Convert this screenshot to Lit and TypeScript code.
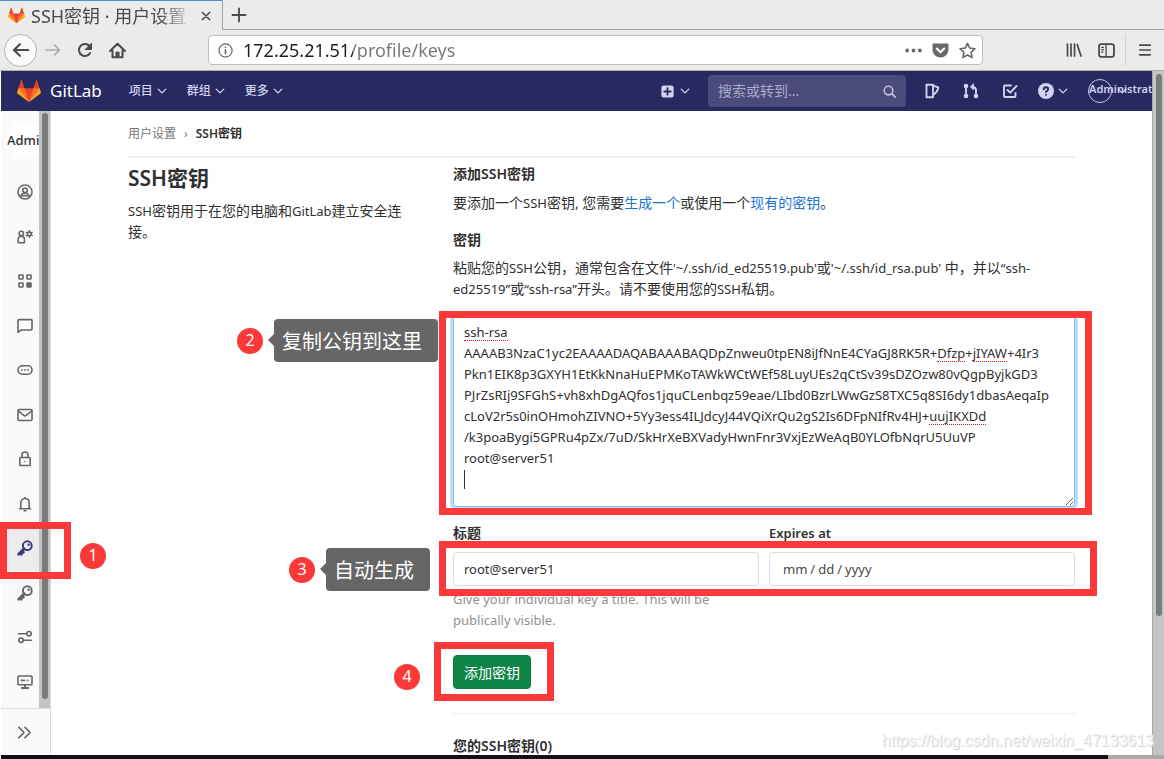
import { LitElement, html, css, svg } from "lit";
import { customElement, state } from "lit/decorators.js";
import { classMap } from "lit/directives/class-map.js";
import { styleMap } from "lit/directives/style-map.js";

const icon = (size: number, body: unknown, box = 16) => html`<svg
  width=${size} height=${size} viewBox="0 0 ${box} ${box}" fill="none" stroke="currentColor"
  stroke-width="1.6" stroke-linecap="round" stroke-linejoin="round" aria-hidden="true">${body}</svg>`;

const tanuki = (size: number) => html`<svg width=${size} height=${size} viewBox="0 0 36 36" aria-hidden="true">
  <path fill="#e24329" d="M2 14l9.38 9v-9l-4-12.28c-.205-.632-1.176-.632-1.38 0z"/>
  <path fill="#e24329" d="M34 14l-9.38 9v-9l4-12.28c.205-.632 1.176-.632 1.38 0z"/>
  <path fill="#e24329" d="M18 34.38L3 14h30z"/>
  <path fill="#fc6d26" d="M18 34.38L11.38 14H2l4 11z"/>
  <path fill="#fc6d26" d="M18 34.38L24.62 14H34l-4 11z"/>
  <path fill="#fca326" d="M2 14L.1 20.16c-.18.565 0 1.2.5 1.56l17.42 12.66z"/>
  <path fill="#fca326" d="M34 14l1.9 6.16c.18.565 0 1.2-.5 1.56L18 34.38z"/></svg>`;

const chevron = icon(10, svg`<path d="M2 5l6 6 6-6" stroke-width="2.200"/>`);

const keyShape = svg`<circle cx="10.300" cy="5.700" r="4.400" stroke-width="2"/><path d="M7.200 8.800L1.700 14.300M3 13l1.300 1.300M5 11l1.300 1.300" stroke-width="2.800"/><circle cx="11.600" cy="4.700" r="1.200" fill="currentColor" stroke="none"/>`;

const sideItems = [
  { label: "个人资料", shape: svg`<circle cx="8" cy="8" r="7"/><circle cx="8" cy="6.300" r="2.300"/><path d="M3.800 13.200c0-2.500 1.700-3.900 4.200-3.900s4.200 1.400 4.200 3.900M5.500 11.800h5"/>` },
  { label: "帐户", shape: svg`<circle cx="4.300" cy="4.500" r="2.200"/><path d="M1.200 13.800V10c0-1.700 1.200-2.800 3.100-2.800S7.400 8.300 7.400 10v3.800z"/><circle cx="12.300" cy="5" r="1.900"/><path d="M12.300 1.800v1M12.300 7.200v1M9.500 3.400l.9.500M14.200 6.100l.9.500M9.500 6.600l.9-.5M14.200 3.900l.9-.5"/>` },
  { label: "应用", shape: svg`<rect x="2" y="2" width="4" height="4" rx=".4"/><rect x="10" y="2" width="4" height="4" rx=".4"/><rect x="2" y="10" width="4" height="4" rx=".4"/><rect x="10" y="10" width="4" height="4" rx=".4" fill="currentColor"/>` },
  { label: "聊天", shape: svg`<path d="M1 2.500c0-.5.400-.9.900-.9h12.200c.5 0 .9.400.9.900v8.600c0 .5-.4.900-.9.900H4L1 14.300z"/>` },
  { label: "访问令牌", shape: svg`<rect x="1" y="3.800" width="14" height="8.400" rx="4.200"/><path d="M5 8h.01M8 8h.01M11 8h.01" stroke-width="1.800"/>` },
  { label: "电子邮件", shape: svg`<rect x="1" y="2.500" width="14" height="11" rx="1"/><path d="M1.500 4l5.300 4.300c.7.600 1.700.6 2.400 0L14.500 4"/>` },
  { label: "密码", shape: svg`<rect x="2.800" y="6.500" width="10.400" height="8" rx=".8"/><path d="M5 6.500V4a3 3 0 016 0v2.500M8 10.500h.01"/>` },
  { label: "通知", shape: svg`<path d="M2.500 12.800h11M3.800 12.600V7c0-2.700 1.700-4.500 4.200-4.500s4.200 1.800 4.200 4.500v5.600M8 1.500v1M7.200 14.800h1.600"/>` },
  { label: "SSH密钥", active: true, shape: keyShape },
  { label: "GPG密钥", shape: keyShape },
  { label: "偏好设置", shape: svg`<path d="M1.500 4.700h8M6.500 11.300h8"/><circle cx="12" cy="4.700" r="2.200"/><circle cx="4" cy="11.300" r="2.200"/>` },
  { label: "活动会话", shape: svg`<rect x="1" y="2" width="14" height="8.800" rx=".8"/><path d="M4.500 6.400h3M10.500 6.400h.01M8 11v2.800M4.800 14h6.400" stroke-width="1.800"/>` },
];

const publicKey = `ssh-rsa
AAAAB3NzaC1yc2EAAAADAQABAAABAQDpZnweu0tpEN8iJfNnE4CYaGJ8RK5R+Dfzp+jIYAW+4Ir3
Pkn1EIK8p3GXYH1EtKkNnaHuEPMKoTAWkWCtWEf58LuyUEs2qCtSv39sDZOzw80vQgpByjkGD3
PJrZsRIj9SFGhS+vh8xhDgAQfos1jquCLenbqz59eae/LIbd0BzrLWwGzS8TXC5q8SI6dy1dbasAeqaIp
cLoV2r5s0inOHmohZIVNO+5Yy3ess4ILJdcyJ44VQiXrQu2gS2Is6DFpNIfRv4HJ+uujIKXDd
/k3poaBygi5GPRu4pZx/7uD/SkHrXeBXVadyHwnFnr3VxjEzWeAqB0YLOfbNqrU5UuVP
root@server51
`;

const misspelled = ["ssh-rsa", "Dfzp", "jIYAW", "uujIKXDd"];

@customElement("browser-chrome")
class BrowserChrome extends LitElement {
  static styles = css`
    :host { display: block; flex: none; color: #474b4c; background: #ebebe9; font: 18px/20px "Noto Sans", "Noto Sans CJK SC", sans-serif; }
    * { box-sizing: border-box; }
    svg { display: block; flex: none; }
    button { border: 0; padding: 0; background: none; color: inherit; display: grid; place-items: center; }
    .tabs { display: flex; height: 30px; }
    .tab { display: flex; align-items: center; gap: 6px; width: 223px; padding: 0 10px 0 8px; border-top: 1px solid #4a90d9; border-right: 1px solid #a5a5a3; }
    .title { flex: 1; white-space: nowrap; overflow: hidden; line-height: 26px; -webkit-mask-image: linear-gradient(90deg, #000 78%, transparent); mask-image: linear-gradient(90deg, #000 78%, transparent); }
    .rest { flex: 1; display: flex; align-items: center; padding-left: 8px; border-bottom: 1px solid #a5a5a3; }
    .bar { display: flex; align-items: center; height: 41px; padding: 0 9px 0 4px; border-bottom: 1px solid #b0b0ae; }
    .back { width: 33px; height: 33px; border: 1px solid #b2b2b0; border-radius: 50%; background: #fafafa; }
    .tool { width: 32px; height: 32px; }
    .dim { color: #aaaba9; }
    .url { flex: 1; display: flex; align-items: center; gap: 10px; height: 30px; margin: 0 75px; padding: 0 6px 0 9px; border: 1px solid #bdbdbb; border-radius: 4px; background: #fff; color: #666a6a; }
    .url input { flex: 1; min-width: 0; border: 0; padding: 0; outline: 0; font: inherit; -webkit-text-fill-color: transparent; background: linear-gradient(90deg, #1c1f20 110px, #747777 110px); -webkit-background-clip: text; background-clip: text; }
    .menu { border-left: 1px solid #d2d2d0; padding-left: 9px; margin-left: 3px; width: 30px; }
  `;
  render() {
    return html`
      <div class="tabs">
        <div class="tab">${tanuki(17)}<span class="title">SSH密钥 · 用户设置</span>
          <button aria-label="关闭标签页">${icon(12, svg`<path d="M3 3l10 10M13 3L3 13" stroke-width="2"/>`)}</button></div>
        <div class="rest"><button aria-label="新标签页">${icon(16, svg`<path d="M8 1.500v13M1.500 8h13" stroke-width="1.800"/>`)}</button></div>
      </div>
      <div class="bar">
        <button class="back" aria-label="后退">${icon(18, svg`<path d="M14.500 8H2M7 2.800L1.800 8 7 13.200" stroke-width="1.900"/>`)}</button>
        <button class="tool dim" aria-label="前进">${icon(16, svg`<path d="M1 8h13M9.500 3L14.500 8l-5 5"/>`)}</button>
        <button class="tool" aria-label="刷新">${icon(16, svg`<path d="M13.200 11A6 6 0 1112.500 4" stroke-width="2"/><path d="M14.500 1.500v6h-6z" fill="currentColor" stroke-width="1"/>`)}</button>
        <button class="tool" aria-label="主页">${icon(17, svg`<path d="M1 8.500L8 1.700l7 6.800M3.300 8v6.300h9.400V8" stroke-width="1.900"/><path d="M6.500 14V9.500h3V14z" fill="currentColor" stroke-width=".8"/>`)}</button>
        <div class="url">
          ${icon(15, svg`<circle cx="8" cy="8" r="7" stroke-width="1.300"/><path d="M8 7.300v4M8 4.500h.01" stroke-width="1.800"/>`)}
          <input aria-label="地址" value="172.25.21.51/profile/keys" />
          ${icon(17, svg`<path d="M2 8h.01M8 8h.01M14 8h.01" stroke-width="3.600"/>`)}
          ${icon(17, svg`<path d="M1.200 1.500h13.600c.4 0 .7.300.7.700v5a7.500 7.500 0 01-15 0v-5c0-.4.300-.7.700-.7z" fill="#666a6a" stroke="none"/><path d="M4.500 6.200L8 9.600l3.500-3.400" stroke="#fff" stroke-width="2"/>`)}
          ${icon(17, svg`<path d="M8 1.200l2.100 4.500 4.900.6-3.600 3.400.9 4.900L8 12.200l-4.300 2.400.9-4.900L1 6.300l4.900-.6z" stroke-width="1.500"/>`)}
        </div>
        <button class="tool" aria-label="书库">${icon(16, svg`<path d="M1.500 2v12M5 2v12M8.500 2v12M11.200 2.500l3.800 11.500" stroke-width="1.700"/>`)}</button>
        <button class="tool" aria-label="侧栏">${icon(17, svg`<rect x="1" y="2" width="14" height="12" rx="2" stroke-width="1.700"/><path d="M7.600 2v12M3.500 5h1.700M3.500 7.200h1.700M3.500 9.400h1" stroke-width="1.200"/>`)}</button>
        <button class="tool menu" aria-label="菜单">${icon(14, svg`<path d="M2 2.500h12M2 8h12M2 13.500h12" stroke-width="1.900"/>`)}</button>
      </div>`;
  }
}

@customElement("gitlab-nav")
class GitlabNav extends LitElement {
  static styles = css`
    :host { display: flex; align-items: center; flex: none; height: 40px; overflow: hidden; background: #292961; color: #d1d1f0; font: 12px/18px "Noto Sans", "Noto Sans CJK SC", sans-serif; }
    * { box-sizing: border-box; }
    svg { display: block; flex: none; }
    a { color: inherit; text-decoration: none; }
    button { display: flex; align-items: center; gap: 4px; padding: 0; border: 0; background: none; color: inherit; font: inherit; font-weight: 500; }
    .brand { display: flex; align-items: center; gap: 9px; margin: 0 27px 0 16px; color: #fff; font-size: 17px; line-height: 24px; }
    .menus { display: flex; gap: 20px; flex: 1; }
    .plus { gap: 6px; }
    .search { display: flex; align-items: center; width: 198px; height: 32px; margin: 0 18px; padding: 0 10px; border-radius: 4px; background: #4b4b7b; }
    .search input { flex: 1; min-width: 0; border: 0; padding: 0; outline: 0; background: none; color: #fff; font: inherit; font-size: 14px; }
    .search input::placeholder { color: #a9a9cd; opacity: 1; }
    .links { display: flex; gap: 23px; margin-right: 20px; }
    .help { margin-right: 20px; }
    .avatar { position: relative; width: 64px; height: 24px; }
    .ring { width: 24px; height: 24px; border: 1px solid #c9c9e4; border-radius: 50%; line-height: 18px; white-space: nowrap; color: #d1d1f0; font-size: 11px; font-weight: 600; }
    .avatar svg { position: absolute; left: 29px; top: 7px; }
  `;
  render() {
    return html`
      <a class="brand" href="#">${tanuki(24)}<span>GitLab</span></a>
      <nav class="menus">${["项目", "群组", "更多"].map((t) => html`<button>${t}${chevron}</button>`)}</nav>
      <button class="plus" aria-label="新建">${icon(13, svg`<rect x=".5" y=".5" width="15" height="15" rx="2.500" fill="currentColor" stroke="none"/><path d="M8 4v8M4 8h8" stroke="#292961" stroke-width="2.200"/>`)}${chevron}</button>
      <label class="search"><input type="search" aria-label="搜索" placeholder="搜索或转到..." />${icon(13, svg`<circle cx="6.800" cy="6.800" r="5.300" stroke-width="2" stroke="#c0c0de"/><path d="M11 11l4 4" stroke="#c0c0de" stroke-width="2.200"/>`)}</label>
      <div class="links">
        <a href="#" aria-label="议题">${icon(16, svg`<path d="M2.500 1.800h6.500v12.400H2.500zM9 2.200c1 .8 2.500 1.500 5.300 2.300-.4 3-1.900 5.400-5.300 7.500" stroke-width="1.900"/>`)}</a>
        <a href="#" aria-label="合并请求">${icon(16, svg`<circle cx="3" cy="3" r="1.500" fill="currentColor"/><circle cx="3" cy="13" r="1.500" fill="currentColor"/><circle cx="13" cy="13" r="1.500" fill="currentColor"/><path d="M3 3v10M13 12V7.500c0-2-1-3.300-3-3.500" stroke-width="1.900"/><path d="M10.500 1v6L7.500 4z" fill="currentColor" stroke-width=".8"/>`)}</a>
        <a href="#" aria-label="待办事项">${icon(16, svg`<path d="M9 2.500H3c-.6 0-1 .4-1 1V13c0 .6.400 1 1 1h9.500c.6 0 1-.4 1-1v-3M5.500 7l2.700 2.700L14.500 3" stroke-width="1.900"/>`)}</a>
      </div>
      <button class="help" aria-label="帮助">${icon(16, svg`<circle cx="8" cy="8" r="8" fill="currentColor" stroke="none"/><path d="M5.800 6.200C5.900 4.900 6.800 4.300 8 4.300s2.200.7 2.200 1.800c0 1.500-2 1.600-2.200 3M8 11.700h.01" stroke="#292961" stroke-width="1.900"/>`)}${chevron}</button>
      <div class="avatar"><div class="ring">Administrator</div>${chevron}</div>`;
  }
}

@customElement("side-bar")
class SideBar extends LitElement {
  static styles = css`
    :host { position: relative; display: flex; flex-direction: column; flex: none; width: 50px; border-right: 1px solid #dcdcdc; background: #fafafa; color: #666; font: 500 13px/18px "Noto Sans", sans-serif; }
    * { box-sizing: border-box; }
    svg { display: block; }
    .who { flex: none; width: 38px; height: 38px; margin: 10px 0 11px 6px; border-radius: 50%; background: #fff; line-height: 38px; color: #303030; overflow: hidden; white-space: nowrap; }
    nav { flex: 1; display: flex; flex-direction: column; }
    nav a { flex: 1; display: grid; place-items: center; padding-right: 2px; color: inherit; position: relative; }
    nav a.active { background: #ececef; color: #393982; }
    .collapse { flex: none; height: 47px; margin-top: 4px; padding: 0 2px 0 0; border: 0; border-top: 1px solid #dcdcdc; background: #fafafa; color: inherit; display: grid; place-items: center; }
    .track { position: absolute; top: 0; right: 0; bottom: 47px; width: 11px; padding: 2px 2px 9px 3px; background: #c3c5c4; }
    .thumb { width: 6px; height: 100%; border-radius: 3px; background: #787c7d; }
    .frame { position: absolute; z-index: 2; left: -1px; top: -4px; width: 71px; height: 57px; border: 7px solid #fb3939; }
  `;
  render() {
    return html`
      <div class="who">Administrator</div>
      <nav>${sideItems.map((i) => html`<a href="#" aria-label=${i.label} class=${classMap({ active: !!i.active })}>${icon(16, i.shape)}${i.active ? html`<span class="frame"></span>` : ""}</a>`)}</nav>
      <button class="collapse" aria-label="折叠侧边栏">${icon(15, svg`<path d="M2 2.500L7.500 8 2 13.500M8.500 2.500L14 8l-5.500 5.500" stroke-width="1.800"/>`)}</button>
      <div class="track"><div class="thumb"></div></div>`;
  }
}

@customElement("step-note")
class StepNote extends LitElement {
  static properties = { step: {}, text: {} };
  declare step: string;
  declare text: string;
  static styles = css`
    :host { display: flex; align-items: center; gap: 11px; color: #fff; font: 20px/43px "Noto Sans CJK SC", sans-serif; white-space: nowrap; }
    .dot { width: 26px; height: 26px; border-radius: 50%; background: #fb3939; font-family: "Noto Sans", sans-serif; font-size: 16px; line-height: 24px; text-align: center; }
    .tip { position: relative; padding: 0 16px 0 8px; border-radius: 4px; background: #666; }
    .tip::before { content: ""; position: absolute; left: -6px; top: 15px; border: 6px solid transparent; border-left: 0; border-right-color: #666; }
  `;
  render() {
    return html`<span class="dot">${this.step}</span>${this.text ? html`<span class="tip">${this.text}</span>` : ""}`;
  }
}

@customElement("app-root")
class AppRoot extends LitElement {
  @state() marks: { left: number; top: number; width: number }[] = [];

  static styles = css`
    :host { position: relative; display: flex; flex-direction: column; height: 100vh; overflow: hidden; background: #fff; color: #303030; font: 14px/21px "Noto Sans", "Noto Sans CJK SC", sans-serif; }
    * { box-sizing: border-box; }
    a { color: #1b74d0; text-decoration: none; }
    h1, h2, p { margin: 0; }
    .window { flex: 1; min-height: 0; display: flex; padding-left: 1px; }
    .site { flex: 1; min-width: 0; display: flex; flex-direction: column; }
    .body { flex: 1; min-height: 0; display: flex; }
    .scroll { width: 12px; padding: 3px; background: #c3c5c4; border-left: 1px solid #a9abaa; }
    .scroll-thumb { width: 6px; height: 80%; border-radius: 3px; background: #787c7d; }
    main { flex: 1; min-width: 0; padding: 0 77px; }
    .crumbs { display: flex; gap: 8px; height: 47px; align-items: center; border-bottom: 2px solid #ececec; font-size: 12px; color: #777; }
    .crumbs a { color: inherit; }
    .crumbs b { color: #303030; font-weight: 600; }
    .cols { display: grid; grid-template-columns: 1fr 2fr; gap: 14px; }
    .intro { padding: 6px 28px 0 0; }
    h1 { margin-bottom: 7px; font-size: 21px; line-height: 29px; font-weight: 600; }
    h2, label { display: block; font-size: 14px; line-height: 21px; font-weight: 600; }
    .latin { font-size: 13px; line-height: 13px; }
    .form { padding-top: 5px; }
    .form h2 { margin-bottom: 8px; }
    .key-label { margin: 16px 0 7px; }
    .field { position: relative; }
    .key { margin: 15px 0; }
    textarea { display: block; width: 100%; height: 193px; padding: 7px 10px; border: 1px solid #80bdff; border-radius: 4px; outline: 0; box-shadow: 0 0 0 3px #bfdeff; font: inherit; font-size: 13px; color: inherit; white-space: pre; overflow: hidden; }
    .squiggle { position: absolute; height: 1px; border-bottom: 1px dotted #e01b24; }
    .caret { position: absolute; left: 11px; top: 156px; width: 1px; height: 19px; background: #303030; }
    .pair { position: relative; display: grid; grid-template-columns: 1fr 1fr; gap: 0 10px; }
    .pair label { margin-bottom: 9px; }
    .pair input { display: block; width: 100%; height: 34px; padding: 0 10px; border: 1px solid #dbdbdb; border-radius: 4px; font: inherit; font-size: 13px; color: inherit; background: #fff; outline: 0; }
    .pair input[type="date"] { padding: 0 12px; color: #4a4a4a; }
    input::-webkit-calendar-picker-indicator { display: none; }
    input::-webkit-datetime-edit-text { padding: 0 2px; }
    .help { margin-top: 3px; padding-right: 30px; color: #919191; font-size: 13px; }
    .submit { position: relative; width: max-content; margin: 24px 0; }
    .submit button { display: block; height: 34px; padding: 0 10px; border: 1px solid #0f7a43; border-radius: 4px; background: #108548; color: #fff; font: inherit; }
    .list { border-top: 1px solid #ececec; padding-top: 21px; }
    .frame { position: absolute; border: 7px solid #fb3939; pointer-events: none; }
    .around-key { inset: -3px -17px -8px -14px; }
    .around-pair { left: -14px; right: -22px; top: 19px; height: 55px; }
    .around-submit { inset: -13px -23px -12px -19px; }
    step-note { position: absolute; }
    .n1 { left: 80px; top: 543px; }
    .n2 { right: calc(100% + 15px); top: 5px; }
    .n3 { right: calc(100% + 23px); top: 26px; }
    .n4 { right: calc(100% + 33px); top: 9px; }
    .taskbar { flex: none; height: 4px; margin-left: 1px; background: linear-gradient(90deg, #111218 calc(100% - 56px), #aaa calc(100% - 56px)); }
    .watermark { position: absolute; right: 10px; bottom: 8px; font: 16px/20px "Liberation Sans", sans-serif; color: #f6f6f6; text-shadow: 1px 1px 1px #ccc; }
  `;

  firstUpdated() {
    // Spelling marks sit under the words, measured in the text box's own font.
    const box = this.renderRoot.querySelector("textarea")!;
    const style = getComputedStyle(box);
    const pen = document.createElement("canvas").getContext("2d")!;
    pen.font = `${style.fontSize} ${style.fontFamily}`;
    const rows = publicKey.split("\n");
    this.marks = misspelled.map((word) => {
      const row = rows.findIndex((r) => r.includes(word));
      const before = rows[row].slice(0, rows[row].indexOf(word));
      return {
        left: Math.round(11 + pen.measureText(before).width),
        top: 26 + row * 21,
        width: Math.round(pen.measureText(word).width),
      };
    });
  }

  render() {
    return html`
      <browser-chrome></browser-chrome>
      <div class="window">
        <div class="site">
          <gitlab-nav></gitlab-nav>
          <div class="body">
            <side-bar></side-bar>
            <main>
              <nav class="crumbs"><a href="#">用户设置</a><span>›</span><b>SSH密钥</b></nav>
              <div class="cols">
                <section class="intro"><h1>SSH密钥</h1><p><span class="latin">SSH</span>密钥用于在您的电脑和<span class="latin">GitLab</span>建立安全连接。</p></section>
                <section class="form">
                  <h2>添加SSH密钥</h2>
                  <p>要添加一个<span class="latin">SSH</span>密钥, 您需要<a href="#">生成一个</a>或使用一个<a href="#">现有的密钥</a>。</p>
                  <label class="key-label" for="key">密钥</label>
                  <p>粘贴您的<span class="latin">SSH</span>公钥，通常包含在文件<span class="latin">'~/.ssh/id_ed25519.pub'</span>或<span class="latin">'~/.ssh/id_rsa.pub'</span> 中，并以<span class="latin">“ssh-ed25519”</span>或<span class="latin">“ssh-rsa”</span>开头。请不要使用您的<span class="latin">SSH</span>私钥。</p>
                  <div class="field key">
                    <textarea id="key" spellcheck="false" .value=${publicKey}></textarea>
                    ${this.marks.map((m) => html`<span class="squiggle" style=${styleMap({ left: `${m.left}px`, top: `${m.top}px`, width: `${m.width}px` })}></span>`)}
                    <span class="caret"></span>
                    <span class="frame around-key"></span>
                    <step-note class="n2" step="2" text="复制公钥到这里"></step-note>
                  </div>
                  <div class="pair">
                    <div><label for="title">标题</label><input id="title" type="text" value="root@server51" />
                      <p class="help">Give your individual key a title. This will be publically visible.</p></div>
                    <div><label for="expires"><span class="latin">Expires at</span></label><input id="expires" type="date" /></div>
                    <span class="frame around-pair"></span>
                    <step-note class="n3" step="3" text="自动生成"></step-note>
                  </div>
                  <div class="submit"><button>添加密钥</button><span class="frame around-submit"></span><step-note class="n4" step="4"></step-note></div>
                  <div class="list"><h2>您的SSH密钥(0)</h2></div>
                </section>
              </div>
            </main>
          </div>
        </div>
        <div class="scroll"><div class="scroll-thumb"></div></div>
      </div>
      <div class="taskbar"></div>
      <step-note class="n1" step="1"></step-note>
      <div class="watermark">https://blog.csdn.net/weixin_47133613</div>`;
  }
}
